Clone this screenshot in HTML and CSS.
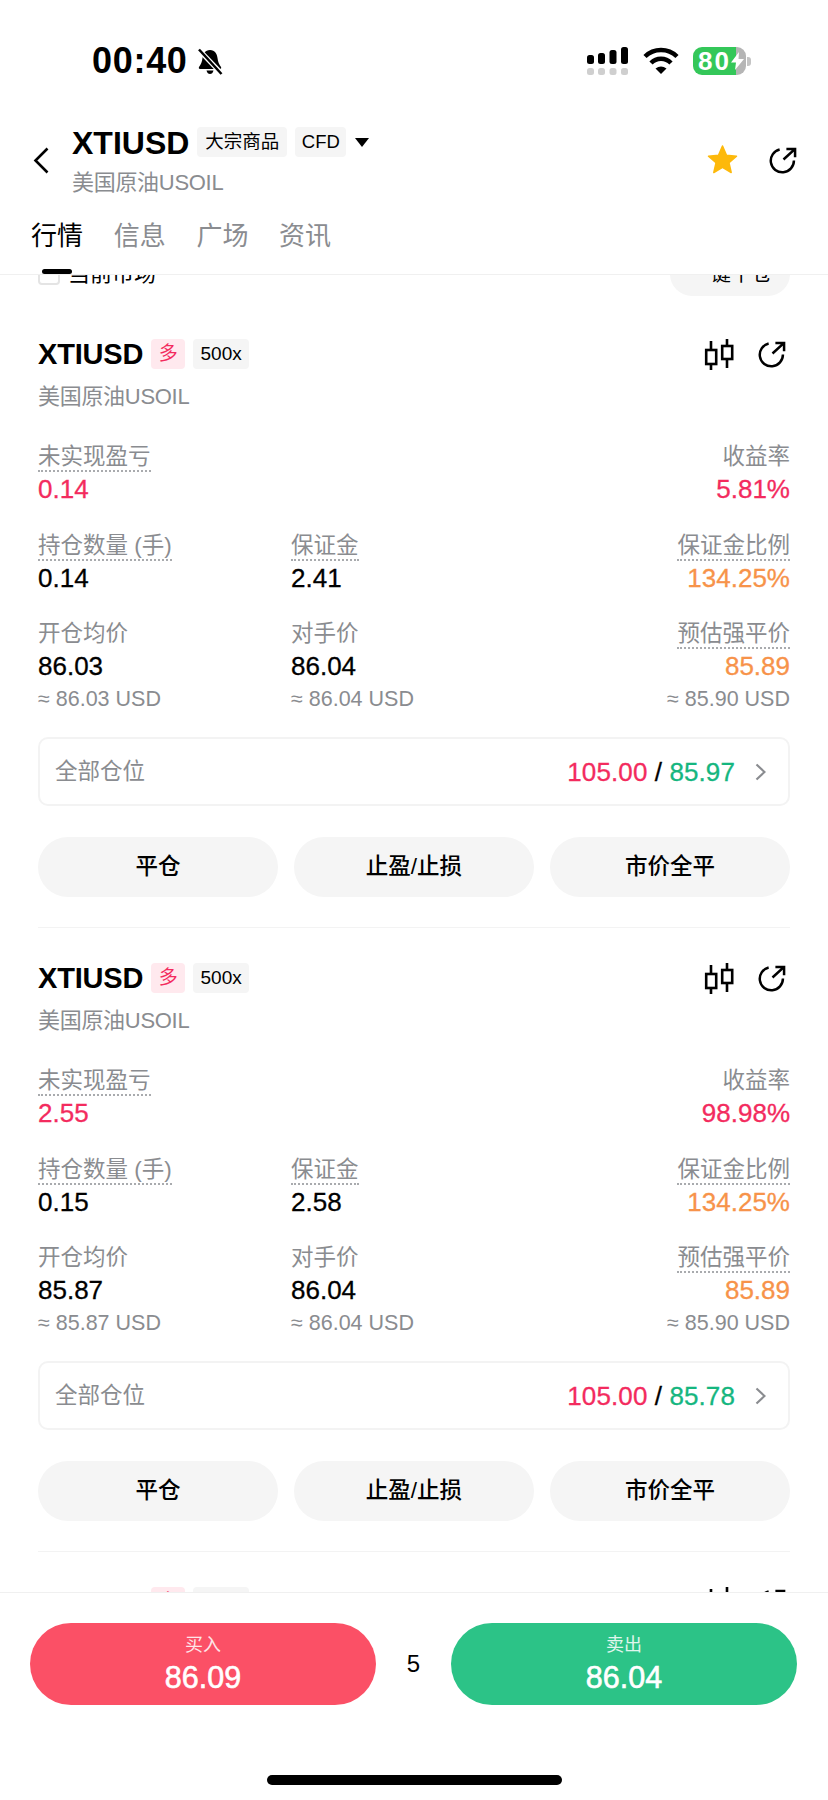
FILE: index.html
```html
<!DOCTYPE html>
<html lang="zh-CN">
<head>
<meta charset="utf-8">
<title>XTIUSD</title>
<link rel="stylesheet" href="styles.css">
</head>
<body>
<div class="app">
  <div class="status">
    <span class="time">00:40</span>
    <svg class="bell" viewBox="0 0 26 27"><path d="M13 2C8 2 6 6 5.500 10 5 14 4 16 2 19c-.5 1 0 2 1 2h20c1 0 1.500-1 1-2-2-3-3-5-3.500-9C20 6 18 2 13 2z"/><path d="M9.500 22.500h7c-.5 2.500-2 3.500-3.500 3.500s-3-1-3.500-3.500z"/><path class="bell-gap" d="M1 1l24 25"/><path class="bell-slash" d="M2 1.500l22.500 24.500"/></svg>
    <span class="status-gap"></span>
    <svg class="signal" viewBox="0 0 41 28"><rect x="0" y="8" width="7" height="9" rx="2.500"/><rect x="11" y="6" width="7" height="11" rx="2.500"/><rect x="22.500" y="3" width="7" height="14" rx="2.500"/><rect x="34" y="0" width="7" height="17" rx="2.500"/><g class="signal-off"><rect x="0" y="21" width="7" height="7" rx="2.500"/><rect x="11" y="21" width="7" height="7" rx="2.500"/><rect x="22.500" y="21" width="7" height="7" rx="2.500"/><rect x="34" y="21" width="7" height="7" rx="2.500"/></g></svg>
    <svg class="wifi" viewBox="0 0 36 27"><path class="wifi-arc" d="M2 9.500a23 23 0 0 1 32 0"/><path class="wifi-arc" d="M8 16a14 14 0 0 1 20 0"/><path d="M12.500 21.500q5.500-4 11 0L18 27z"/></svg>
    <div class="battery">
      <div class="battery-body"><span class="battery-level">80</span></div>
      <span class="battery-nub"></span>
      <svg class="bolt" viewBox="0 0 13 18"><path d="M8 0L0 10.500h5L4 18l9-11H7.500z"/></svg>
    </div>
  </div>

  <header class="head">
    <svg class="back" viewBox="0 0 16 27"><path d="M14.500 1.500L2.500 13.500l12 12"/></svg>
    <div class="head-info">
      <div class="head-title">
        <span class="symbol">XTIUSD</span>
        <span class="tag tag-wide">大宗商品</span>
        <span class="tag tag-cfd">CFD</span>
        <span class="caret"></span>
      </div>
      <div class="head-sub">美国原油USOIL</div>
    </div>
    <svg class="star" viewBox="0 0 31 30"><path d="M15.500 2l4 9.300 10 .9-7.500 6.600 2.200 9.700-8.700-5.100-8.700 5.100 2.200-9.700L1.500 12.200l10-.9z"/></svg>
    <svg class="share share-head" viewBox="0 0 30 28"><path d="M11 2.600A12 12 0 1 0 25.800 14"/><path d="M15 13L27 2M18 2h9v8.500"/></svg>
  </header>

  <nav class="tabs">
    <span class="tab tab-active">行情</span>
    <span class="tab">信息</span>
    <span class="tab">广场</span>
    <span class="tab">资讯</span>
  </nav>

  <main class="scroller">
    <div class="filter">
      <span class="check"></span>
      <span class="filter-text">当前市场</span>
      <span class="close-all">一键平仓</span>
    </div>

    <section class="card">
      <div class="card-head">
        <span class="card-symbol">XTIUSD</span>
        <span class="badge badge-long">多</span>
        <span class="badge badge-lev">500x</span>
        <svg class="candle" viewBox="0 0 30 32"><path d="M7 2v9M7 25v6M23 0v6M23 20v9"/><rect x="2.200" y="11" width="10" height="14"/><rect x="18.200" y="7" width="10" height="13"/></svg>
        <svg class="share share-card" viewBox="0 0 30 28"><path d="M11 2.600A12 12 0 1 0 25.800 14"/><path d="M15 13L27 2M18 2h9v8.500"/></svg>
      </div>
      <div class="card-sub">美国原油USOIL</div>
      <div class="stats">
        <div class="stat"><span class="label dotted">未实现盈亏</span><span class="value red">0.14</span></div>
        <div class="stat stat-end"><span class="label">收益率</span><span class="value red">5.81%</span></div>
        <div class="stat"><span class="label dotted">持仓数量 (手)</span><span class="value">0.14</span></div>
        <div class="stat"><span class="label dotted">保证金</span><span class="value">2.41</span></div>
        <div class="stat stat-right"><span class="label dotted">保证金比例</span><span class="value orange">134.25%</span></div>
        <div class="stat"><span class="label">开仓均价</span><span class="value">86.03</span><span class="approx">≈ 86.03 USD</span></div>
        <div class="stat"><span class="label">对手价</span><span class="value">86.04</span><span class="approx">≈ 86.04 USD</span></div>
        <div class="stat stat-right"><span class="label dotted">预估强平价</span><span class="value orange">85.89</span><span class="approx">≈ 85.90 USD</span></div>
      </div>
      <div class="all-pos">
        <span class="all-label">全部仓位</span>
        <span class="all-values"><span class="red">105.00</span> / <span class="green">85.97</span></span>
        <svg class="chev" viewBox="0 0 11 18"><path d="M1.500 1.500L9.500 9l-8 7.500"/></svg>
      </div>
      <div class="actions">
        <span class="action">平仓</span>
        <span class="action">止盈/止损</span>
        <span class="action">市价全平</span>
      </div>
    </section>

    <section class="card">
      <div class="card-head">
        <span class="card-symbol">XTIUSD</span>
        <span class="badge badge-long">多</span>
        <span class="badge badge-lev">500x</span>
        <svg class="candle" viewBox="0 0 30 32"><path d="M7 2v9M7 25v6M23 0v6M23 20v9"/><rect x="2.200" y="11" width="10" height="14"/><rect x="18.200" y="7" width="10" height="13"/></svg>
        <svg class="share share-card" viewBox="0 0 30 28"><path d="M11 2.600A12 12 0 1 0 25.800 14"/><path d="M15 13L27 2M18 2h9v8.500"/></svg>
      </div>
      <div class="card-sub">美国原油USOIL</div>
      <div class="stats">
        <div class="stat"><span class="label dotted">未实现盈亏</span><span class="value red">2.55</span></div>
        <div class="stat stat-end"><span class="label">收益率</span><span class="value red">98.98%</span></div>
        <div class="stat"><span class="label dotted">持仓数量 (手)</span><span class="value">0.15</span></div>
        <div class="stat"><span class="label dotted">保证金</span><span class="value">2.58</span></div>
        <div class="stat stat-right"><span class="label dotted">保证金比例</span><span class="value orange">134.25%</span></div>
        <div class="stat"><span class="label">开仓均价</span><span class="value">85.87</span><span class="approx">≈ 85.87 USD</span></div>
        <div class="stat"><span class="label">对手价</span><span class="value">86.04</span><span class="approx">≈ 86.04 USD</span></div>
        <div class="stat stat-right"><span class="label dotted">预估强平价</span><span class="value orange">85.89</span><span class="approx">≈ 85.90 USD</span></div>
      </div>
      <div class="all-pos">
        <span class="all-label">全部仓位</span>
        <span class="all-values"><span class="red">105.00</span> / <span class="green">85.78</span></span>
        <svg class="chev" viewBox="0 0 11 18"><path d="M1.500 1.500L9.500 9l-8 7.500"/></svg>
      </div>
      <div class="actions">
        <span class="action">平仓</span>
        <span class="action">止盈/止损</span>
        <span class="action">市价全平</span>
      </div>
    </section>

    <section class="card">
      <div class="card-head">
        <span class="card-symbol">XTIUSD</span>
        <span class="badge badge-long">多</span>
        <span class="badge badge-lev">500x</span>
        <svg class="candle" viewBox="0 0 30 32"><path d="M7 2v9M7 25v6M23 0v6M23 20v9"/><rect x="2.200" y="11" width="10" height="14"/><rect x="18.200" y="7" width="10" height="13"/></svg>
        <svg class="share share-card" viewBox="0 0 30 28"><path d="M11 2.600A12 12 0 1 0 25.800 14"/><path d="M15 13L27 2M18 2h9v8.500"/></svg>
      </div>
    </section>
  </main>

  <footer class="foot">
    <div class="trade">
      <div class="trade-btn buy"><span class="trade-label">买入</span><span class="trade-price">86.09</span></div>
      <span class="qty">5</span>
      <div class="trade-btn sell"><span class="trade-label">卖出</span><span class="trade-price">86.04</span></div>
    </div>
    <div class="home-bar"></div>
  </footer>
</div>
</body>
</html>
```
FILE: styles.css
```css
* { box-sizing: border-box; }
html, body { margin: 0; padding: 0; background: #fff; }
body {
  font-family: "Liberation Sans", "Noto Sans CJK SC", sans-serif;
  color: #000;
}
svg { display: block; flex: none; }

.app { width: 828px; height: 1800px; display: flex; flex-direction: column; overflow: hidden; background: #fff; }

/* status bar */
.status { height: 125px; flex: none; padding: 41px 77px 0 92px; display: flex; align-items: flex-start; }
.time { font-size: 36px; line-height: 40px; font-weight: 700; letter-spacing: 0.7px; }
.bell { width: 26px; height: 27px; margin: 7px 0 0 9px; }
.bell-gap { stroke: #fff; stroke-width: 5; fill: none; }
.bell-slash { stroke: #000; stroke-width: 2.5; fill: none; }
.status-gap { flex: 1; }
.signal { width: 41px; height: 28px; margin: 6px 15px 0 0; }
.signal-off { fill: #cfcfcf; }
.wifi { width: 36px; height: 27px; margin: 6px 14px 0 0; }
.wifi-arc { fill: none; stroke: #000; stroke-width: 4.5; }
.battery { position: relative; width: 58px; height: 28px; margin-top: 6px; display: flex; align-items: center; }
.battery-body { width: 53px; height: 28px; border-radius: 9px; background: linear-gradient(90deg, #34c759 0 43px, #b5b5b5 43px); padding-left: 5px; flex: none; }
.battery-level { display: block; color: #fff; font-size: 26px; line-height: 28px; font-weight: 700; letter-spacing: 2px; }
.battery-nub { width: 4px; height: 9px; margin-left: 1px; border-radius: 0 3px 3px 0; background: #c4c4c4; }
.bolt { position: absolute; left: 38px; top: 5px; width: 13px; height: 18px; fill: #fff; }

/* header */
.head { height: 73px; flex: none; padding: 0 30px 0 33px; display: flex; align-items: center; }
.back { width: 16px; height: 27px; margin: 0 23px 3px 0; fill: none; stroke: #000; stroke-width: 2.6; }
.head-info { flex: 1; display: flex; flex-direction: column; gap: 7px; }
.head-title { height: 36px; display: flex; align-items: center; }
.symbol { font-size: 32px; line-height: 36px; font-weight: 700; margin-right: 8px; }
.tag { height: 30px; margin-top: -2px; line-height: 30px; font-size: 18.5px; background: #f5f5f5; border-radius: 4px; text-align: center; }
.tag-wide { width: 90px; margin-right: 8px; }
.tag-cfd { width: 51px; }
.caret { margin: -2px 0 0 9px; width: 0; height: 0; border-left: 7px solid transparent; border-right: 7px solid transparent; border-top: 9.5px solid #000; }
.head-sub { height: 30px; font-size: 22px; line-height: 30px; color: #8a8c90; letter-spacing: -0.3px; }
.star { width: 31px; height: 30px; margin: 0 31px 5px 0; fill: #fdb90b; stroke: #fdb90b; stroke-width: 1.5; stroke-linejoin: round; }
.share { fill: none; stroke: #000; stroke-width: 2.6; }
.share-head { width: 29px; height: 27px; margin-bottom: 3px; }

/* tabs */
.tabs { height: 57px; flex: none; margin-top: 20px; padding-left: 31px; display: flex; gap: 30.7px; border-bottom: 1px solid #f0f0f0; }
.tab { position: relative; width: 52px; height: 36px; font-size: 26px; line-height: 36px; color: #8a8c90; white-space: nowrap; }
.tab-active { color: #000; }
.tab-active::after { content: ""; position: absolute; left: 11px; top: 51px; width: 30px; height: 5px; border-radius: 3px; background: #000; }

/* scroll area */
.scroller { flex: 1; min-height: 0; overflow: hidden; padding: 0 38px; }
.filter { height: 44px; margin: -23px 0 8px; display: flex; align-items: center; }
.check { width: 22px; height: 22px; border: 2px solid #e4e4e4; border-radius: 4px; margin-right: 8px; }
.filter-text { flex: 1; font-size: 22px; line-height: 30px; }
.close-all { width: 120px; height: 44px; border-radius: 22px; background: #f5f5f5; font-size: 20.5px; line-height: 44px; text-align: center; padding-left: 2px; }

.card { border-bottom: 1px solid #f3f3f3; padding: 35px 0 30px; }
.card-head { height: 30px; display: flex; align-items: center; }
.card-symbol { font-size: 29px; line-height: 30px; font-weight: 700; letter-spacing: -0.2px; margin-right: 8px; }
.badge { height: 30px; line-height: 30px; font-size: 19px; border-radius: 4px; text-align: center; }
.badge-long { width: 34px; margin-right: 8px; background: #ffe9ee; color: #f32b5e; }
.badge-lev { width: 56px; background: #f5f5f5; }
.candle { width: 30px; height: 32px; margin: 2px 24px 0 auto; fill: none; stroke: #000; stroke-width: 2.6; }
.share-card { width: 29px; height: 27px; margin: 1px 3px 0 0; }
.card-sub { height: 30px; margin-top: 13px; font-size: 22px; line-height: 30px; color: #8a8c90; letter-spacing: -0.3px; }

.stats { margin-top: 30px; display: grid; grid-template-columns: 253px 1fr auto; row-gap: 25.5px; }
.stat { display: flex; flex-direction: column; align-items: flex-start; }
.stat-end { grid-column: 3; align-items: flex-end; }
.stat-right { align-items: flex-end; }
.label { display: block; height: 30px; font-size: 22.5px; line-height: 30px; color: #8a8c90; white-space: nowrap; }
.dotted { border-bottom: 2px dotted #a9abae; }
.value { display: block; height: 32px; margin-top: 1px; font-size: 26px; line-height: 32px; white-space: nowrap; -webkit-text-stroke: 0.3px currentColor; }
.approx { display: block; height: 30px; margin-top: 2px; font-size: 21.5px; line-height: 30px; color: #8a8c90; white-space: nowrap; }
.red { color: #f32b5e; }
.green { color: #15b67f; }
.orange { color: #f7934a; }

.all-pos { height: 69px; margin-top: 23px; padding: 0 22px 0 15px; border: 2px solid #f3f3f3; border-radius: 10px; display: flex; align-items: center; }
.all-label { flex: 1; font-size: 22.5px; line-height: 30px; color: #8a8c90; }
.all-values { font-size: 26px; line-height: 32px; white-space: nowrap; letter-spacing: 0.1px; -webkit-text-stroke: 0.3px currentColor; }
.chev { width: 11px; height: 18px; margin-left: 20px; fill: none; stroke: #8a8c90; stroke-width: 2.2; }

.actions { margin-top: 31px; display: grid; grid-template-columns: repeat(3, 240px); column-gap: 16px; }
.action { height: 60px; border-radius: 30px; background: #f5f5f5; font-size: 22.5px; line-height: 60px; font-weight: 500; text-align: center; }

/* footer */
.foot { flex: none; height: 208px; border-top: 1px solid #f0f0f0; padding-top: 30px; background: #fff; }
.trade { padding: 0 31px 0 30px; display: flex; justify-content: space-between; align-items: center; }
.trade-btn { width: 346px; height: 82px; border-radius: 41px; color: #fff; display: flex; flex-direction: column; align-items: center; padding-top: 10px; }
.buy { background: #fb5066; }
.sell { background: #2cc387; }
.trade-label { height: 24px; font-size: 18px; line-height: 24px; opacity: 0.85; }
.trade-price { height: 36px; margin-top: 2px; font-size: 30.5px; line-height: 36px; -webkit-text-stroke: 0.6px #fff; }
.qty { font-size: 24px; line-height: 30px; }
.home-bar { width: 295px; height: 10px; margin: 70px auto 0; border-radius: 5px; background: #000; }
```
